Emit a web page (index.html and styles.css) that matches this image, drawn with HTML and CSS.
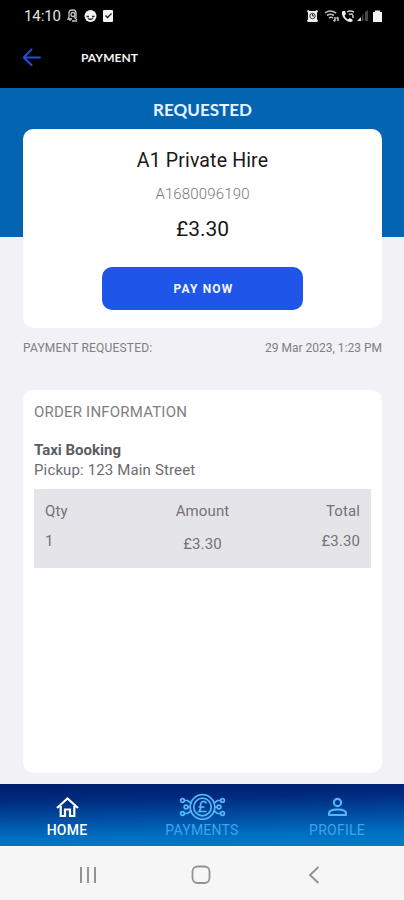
FILE: index.html
```html
<!DOCTYPE html>
<html lang="en">
<head>
<meta charset="utf-8">
<title>Payment</title>
<link rel="stylesheet" href="styles.css">
</head>
<body>
<div class="screen">
  <div class="status">
    <span class="clock">14:10</span>
    <svg class="status-left" width="48" height="14" viewBox="0 0 48 14">
      <g fill="none" stroke="#c4c4c4" stroke-width="1.3"><path d="M2 8V4a3 3 0 0 1 3-3h1a3 3 0 0 1 3 3v5M2 8l-1 2h4M5 12h5M3 12V9"/><circle cx="6" cy="5.5" r="2"/><path d="M7 8l3 3"/></g>
      <circle cx="23.500" cy="7" r="6" fill="#f4f4f4"/><path d="M19.500 7.500h2.500M25 7.500h2.500M21 9.500q2.500 1.500 5 0" stroke="#222" stroke-width="1.300" fill="none"/>
      <rect x="36" y="1" width="10" height="12" rx="1" fill="#f4f4f4"/><path d="M38.500 6.500l2 2 4-4" stroke="#222" stroke-width="1.400" fill="none"/>
    </svg>
    <svg class="status-right" width="76" height="14" viewBox="0 0 76 14">
      <path d="M1 1l2 1h5l2-1 1 1-1 2v6l1 2-1 1H1l-1-1 1-2V4L0 2z" fill="#eee"/><circle cx="5.500" cy="7" r="2.700" fill="none" stroke="#333"/><path d="M5.500 5v2H7" stroke="#333" fill="none"/>
      <g fill="none" stroke="#bbb" stroke-width="1.600"><path d="M18 4q5-4 11 0M20 6.500q3.500-2.500 7 0M22 9q2-1.500 4 0"/><path d="M28 8v4M26.500 11l1.500 1.500M31 12V8.500M29.500 9.500L31 8"/></g>
      <path d="M36 2l2 0 1 3-1.500 1.500q1 3 3.500 4l1.500-1.500 3 1.500v2q-4 1.500-7.500-2T35 3z" fill="#eee"/><path d="M40 3q3-2 7 0M42 5.500q2-1.200 4 0M46 6v3" fill="none" stroke="#ccc" stroke-width="1.500"/>
      <path d="M50 12l4-4v4z" fill="#ddd"/><path d="M55 7l1.500-2v7H55zM58 3l3-2v11h-3z" fill="#484848"/>
      <path d="M66 3h2V1.500h5V3h2v10h-9z" fill="#f4f4f4"/>
    </svg>
  </div>
  <header class="appbar">
    <svg width="20" height="20" viewBox="0 0 20 20" fill="none" stroke="#294dce" stroke-width="2" stroke-linecap="round" stroke-linejoin="round"><path d="M18 9.500H2M9.500 1.500L1.700 9.500l7.800 7.500"/></svg>
    <h1 class="title">PAYMENT</h1>
  </header>
  <main class="content">
    <div class="state">REQUESTED</div>
    <section class="card pay">
      <div class="merchant">A1 Private Hire</div>
      <div class="reference">A1680096190</div>
      <div class="price">£3.30</div>
      <button class="pay-button">PAY NOW</button>
    </section>
    <div class="requested"><span class="req-label">PAYMENT REQUESTED:</span><span class="req-date">29 Mar 2023, 1:23 PM</span></div>
    <section class="card order">
      <h2 class="order-title">ORDER INFORMATION</h2>
      <div class="item">Taxi Booking</div>
      <div class="pickup">Pickup: 123 Main Street</div>
      <div class="table">
        <div class="col"><span>Qty</span><span>1</span></div>
        <div class="col mid"><span>Amount</span><span>£3.30</span></div>
        <div class="col end"><span>Total</span><span>£3.30</span></div>
      </div>
    </section>
  </main>
  <nav class="tabs">
    <div class="tab active">
      <svg width="24" height="28" viewBox="0 0 24 28" fill="none" stroke="currentColor" stroke-width="2.200"><path d="M2 16L12.500 6.500 23 16M5.700 14v10H10v-6.500h5V24h4.300V14"/></svg>
      <span>HOME</span>
    </div>
    <div class="tab payments">
      <svg width="48" height="28" viewBox="0 0 48 28" fill="none" stroke="currentColor" stroke-width="1.700">
        <circle cx="24.500" cy="15" r="12.300"/><circle cx="24.500" cy="15" r="8.800"/>
        <path d="M28.500 11.500q-1-2.500-3.500-2t-2.500 3.500q1 4-1.500 6.500h7.500M20.500 15h6"/>
        <circle cx="4.500" cy="8.500" r="1.900"/><circle cx="8" cy="15" r="1.900"/><circle cx="4.500" cy="21.500" r="1.900"/><circle cx="44.500" cy="8.500" r="1.900"/><circle cx="41" cy="15" r="1.900"/><circle cx="44.500" cy="21.500" r="1.900"/>
        <path d="M6.500 8.500h3l4 3M10 15h2.500M6.500 21.500h3l4-3M42.500 8.500h-3l-4 3M39 15h-2.500M42.500 21.500h-3l-4-3"/>
      </svg>
      <span>PAYMENTS</span>
    </div>
    <div class="tab profile">
      <svg width="24" height="28" viewBox="0 0 24 28" fill="none" stroke="currentColor" stroke-width="2.100"><circle cx="12.500" cy="10.500" r="3.600"/><path d="M4 23v-1.500q0-4 8.500-4t8.500 4V23z" stroke-linejoin="round"/></svg>
      <span>PROFILE</span>
    </div>
  </nav>
  <div class="system">
    <svg width="18" height="18" viewBox="0 0 18 18" stroke="#929292" stroke-width="2"><path d="M2 1v16M9 1v16M16 1v16"/></svg>
    <svg class="home-key" width="20" height="20" viewBox="0 0 20 20" fill="none" stroke="#929292" stroke-width="1.800"><rect x="1.500" y="1.500" width="17" height="16.500" rx="5"/></svg>
    <svg width="12" height="18" viewBox="0 0 12 18" fill="none" stroke="#929292" stroke-width="1.900"><path d="M10.500 1L2 9l8.500 8"/></svg>
  </div>
</div>
</body>
</html>
```
FILE: styles.css
```css
* { box-sizing: border-box; }
body { margin: 0; font-family: Roboto, "Liberation Sans", sans-serif; }
.screen { width: 404px; height: 900px; display: flex; flex-direction: column; overflow: hidden; background: #f1f1f6; white-space: nowrap; }
.status { height: 32px; background: #000; color: #e4e4e4; display: flex; align-items: center; padding: 0 21px 1px 24px; flex: none; }
.clock { width: 43px; font-size: 15px; letter-spacing: -.1px; }
.status-right { margin-left: auto; }
.appbar { height: 56px; flex: none; background: #000; display: flex; align-items: center; padding: 0 22px 5px; }
.title { margin: 1px 0 0 39px; color: #f3f3f3; font: 700 12px/18px Lato, sans-serif; letter-spacing: .05px; }
.content { height: 696px; flex: none; padding: 0 22px 0 23px; background: linear-gradient(#0364b1 149px, #f1f1f6 149px); }
.state { height: 41px; padding-top: 1px; color: #e7f4ff; font: 700 17px/42px Lato, sans-serif; text-align: center; }
.card { background: #fff; border-radius: 10px; }
.pay { height: 199px; display: flex; flex-direction: column; align-items: center; padding-top: 19px; }
.merchant { font-size: 19.5px; line-height: 26px; color: #181818; letter-spacing: .15px; }
.reference { margin-top: 10px; font-size: 15px; line-height: 20px; color: #777; font-weight: 300; letter-spacing: .15px; }
.price { margin-top: 11px; font-size: 21px; line-height: 28px; color: #181818; }
.pay-button { width: 201px; height: 43px; margin-top: 24px; padding: 1px 0 0 2px; border: 0; border-radius: 10px; background: #2055e9; color: #f3f6ff; font: 700 12px/42px Roboto, sans-serif; letter-spacing: 1.2px; }
.requested { height: 62px; display: flex; justify-content: space-between; padding-top: 11px; font-size: 12px; line-height: 18px; color: #808084; }
.req-label { letter-spacing: .2px; }
.order { height: 383px; padding: 12px 11px 0; color: #6c6c6f; }
.order-title { margin: 0; font-weight: 400; font-size: 15px; line-height: 20px; letter-spacing: .2px; color: #808083; }
.item { margin-top: 18px; font-size: 15px; line-height: 20px; font-weight: 700; color: #5c5c5e; }
.pickup { font-size: 15px; line-height: 20px; letter-spacing: .14px; }
.table { height: 79px; margin-top: 9px; padding: 12px 11px; background: #e5e5e9; display: grid; grid-template-columns: 1fr 1fr 1fr; font-size: 15px; line-height: 20px; letter-spacing: .1px; color: #737376; }
.col { display: flex; flex-direction: column; gap: 10px; }
.mid { align-items: center; gap: 13px; }
.end { align-items: flex-end; }
.tabs { height: 62px; flex: none; display: flex; justify-content: space-between; padding: 8px 0 0; background: linear-gradient(179deg, #001d6c 0%, #002b80 25%, #0050a5 55%, #0070c1 80%, #007bcb 100%); color: #3fa3ec; }
.tab { width: 134px; display: flex; flex-direction: column; align-items: center; font-size: 14px; line-height: 18px; letter-spacing: .25px; }
.tab span { margin-top: 1px; }
.tab svg { color: #55b8fa; }
.active, .active svg { color: #fff; font-weight: 500; }
.system { height: 54px; flex: none; background: #f6f6f7; display: flex; align-items: center; justify-content: space-between; padding: 3px 84px 0 79px; }
.home-key { margin-right: 4px; }
```
